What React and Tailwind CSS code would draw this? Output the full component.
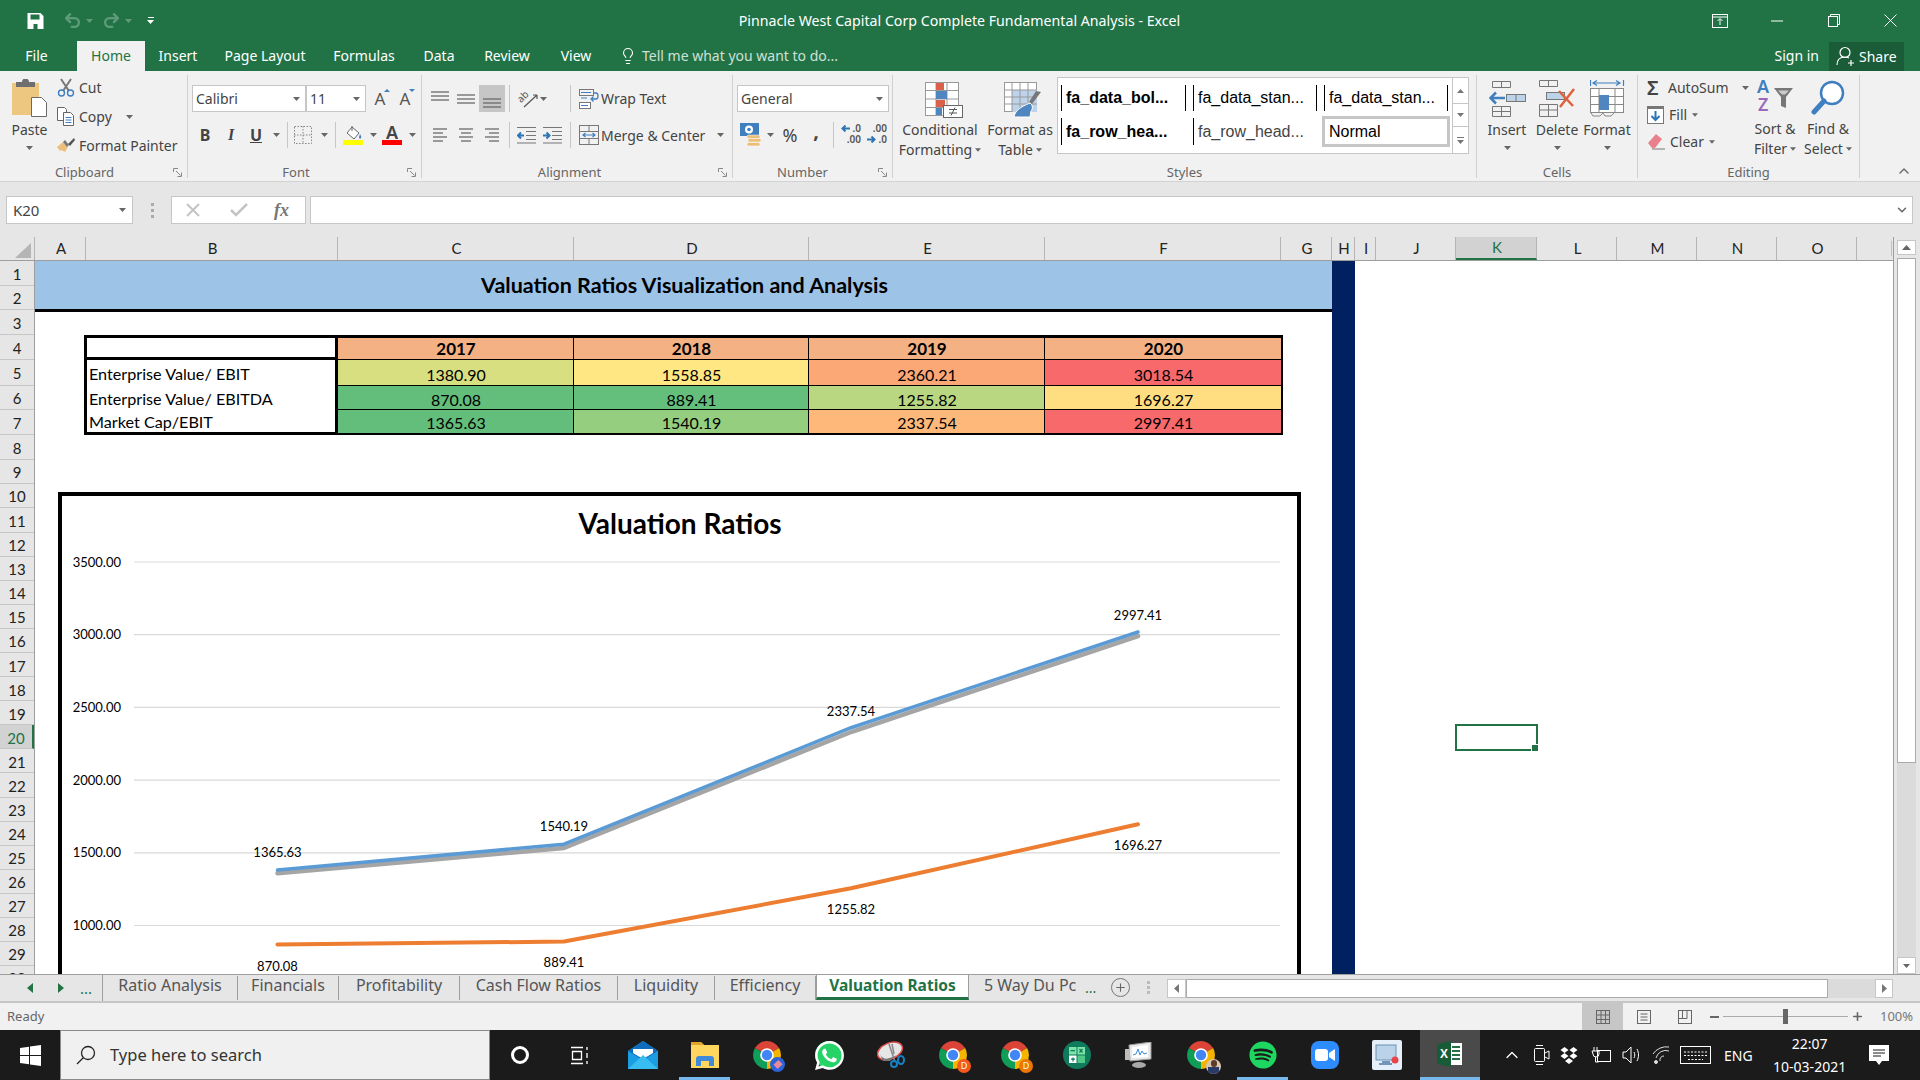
import React from "react";
import { Undo2, Redo2, Lightbulb, ChevronUp, ChevronDown, Plus } from "lucide-react";
import { FaWhatsapp, FaSpotify } from "react-icons/fa";

const Caret = ({ c = "#666", w = 7 }) => (
  <svg width={w} height="4" viewBox="0 0 7 4" className="block shrink-0"><path d="M0 0h7L3.5 4z" fill={c} /></svg>
);
const Launcher = () => (
  <svg width="9" height="9" viewBox="0 0 9 9" className="absolute right-[5px] bottom-[1px]" fill="none" stroke="#888"><path d="M.5 4V.5H5M3 3l4.5 4.500M8.500 4.500v4h-4" /></svg>
);
const Lines = ({ rows, w = 20, h = 22 }) => (
  <svg width={w} height={h} viewBox={`0 0 ${w} ${h}`} stroke="#6a6a6a" strokeWidth="1.3">
    {rows.map(([a, b, y], i) => <path key={i} d={`M${a} ${y}H${b}`} />)}
  </svg>
);

function Group({ label, className, labelClass = "", launcher = true, children }) {
  return (
    <div className={`relative h-[103px] mt-[4px] border-r border-[#D0D0D0] shrink-0 flex flex-col ${className}`}>
      <div className="h-[89px] shrink-0 flex">{children}</div>
      <div className={`h-[17px] shrink-0 leading-[17px] text-[13px] text-[#666] text-center ${labelClass}`}>{label}</div>
      {launcher && <Launcher />}
    </div>
  );
}

const Combo = ({ className, text }) => (
  <div className={`h-[27px] bg-white border border-[#C6C6C6] flex items-center justify-between px-[3px] ${className}`}>
    <span className="text-[14px] text-[#444]">{text}</span>
    <span className="pr-[2px]"><Caret /></span>
  </div>
);
const Cell = ({ className = "", children }) => (
  <div className={`h-full flex items-center justify-center shrink-0 ${className}`}>{children}</div>
);
const Sep = ({ className = "w-[6px]" }) => (
  <div className={`h-full flex justify-center shrink-0 ${className}`}><div className="w-px h-full bg-[#C6C6C6]" /></div>
);

const PasteIcon = () => (
  <svg width="37" height="38" viewBox="0 0 37 38" className="block">
    <rect x="1" y="4" width="27" height="32" fill="#EDC67F" />
    <path d="M5 3h6a3.5 3.5 0 0 1 7 0h6v5H5z" fill="#6F6F6F" />
    <path d="M20.5 18.500h10l5 5v14h-15z" fill="#fff" stroke="#6a6a6a" />
  </svg>
);
const CutIcon = () => (
  <svg width="18" height="19" viewBox="0 0 18 19" fill="none">
    <path d="M4 1l8 12M14 1L6 13" stroke="#777" strokeWidth="2" />
    <circle cx="4.500" cy="15" r="3" stroke="#3F7FBF" strokeWidth="1.400" />
    <circle cx="13.500" cy="15" r="3" stroke="#3F7FBF" strokeWidth="1.400" />
  </svg>
);
const CopyIcon = () => (
  <svg width="18" height="19" viewBox="0 0 18 19" fill="none" stroke="#666">
    <path d="M.5.500h7l2 2v11h-9z" fill="#fff" />
    <path d="M6.500 5.500h7l3 3v10h-10z" fill="#fff" />
    <path d="M8.500 10.500h6M8.500 13h6M8.500 15.500h6" stroke="#3F7FBF" />
  </svg>
);
const PainterIcon = () => (
  <svg width="18" height="15" viewBox="0 0 18 15">
    <path d="M0 9l6-5 5 5-3 5-4-2-1 1z" fill="#EDBF7F" />
    <path d="M6 4l4 5 2-2-4-5z" fill="#777" />
    <path d="M11 6l6-6 1 2-5 6z" fill="#555" />
  </svg>
);
const GrowA = ({ up }) => (
  <span className="relative inline-block text-[17px] leading-[20px] text-[#555] w-[14px] text-center">A
    <svg width="6" height="3" viewBox="0 0 6 3" className="absolute right-[-3px] top-[0px]"><path d={up ? "M0 3L3 0l3 3z" : "M0 0h6L3 3z"} fill="#3F7FBF" /></svg>
  </span>
);
const BorderIcon = () => (
  <svg width="18" height="18" viewBox="0 0 18 18" fill="none" stroke="#888" strokeDasharray="1.500 1.500"><rect x=".5" y=".5" width="17" height="17" /><path d="M9 0v18M0 9h18" /></svg>
);
const FillIcon = () => (
  <div className="flex flex-col items-center">
    <svg width="18" height="14" viewBox="0 0 18 14" fill="none">
      <path d="M8 1l7 6-5 6-7-6z" fill="#fff" stroke="#666" />
      <path d="M8 0v5" stroke="#666" />
      <path d="M16 8c1 2 1.500 3 1 4-.7 1-2 .5-2-.7z" fill="#3F7FBF" />
    </svg>
    <div className="w-[20px] h-[5px] bg-[#FFFF00]" />
  </div>
);
const ColorA = () => (
  <div className="flex flex-col items-center">
    <span className="text-[18px] leading-[15px] font-semibold text-[#444]">A</span>
    <div className="w-[20px] h-[5px] bg-[#FF0000]" />
  </div>
);
const OrientIcon = () => (
  <svg width="24" height="20" viewBox="0 0 24 20" fill="none" overflow="visible">
    <text x="8" y="11" fontSize="10" fill="#555" textAnchor="middle" transform="rotate(-45 8 8)" fontFamily="Noto Sans, sans-serif">ab</text>
    <path d="M9 18L22 6M22 6h-4M22 6v4" stroke="#555" strokeWidth="1.200" />
  </svg>
);
const IndentIcon = ({ inc }) => (
  <svg width="19" height="18" viewBox="0 0 19 18" fill="none">
    <path d="M0 1.500h19M9 5.500h10M9 9.500h10M9 13.500h10M0 17h19" stroke="#777" strokeWidth="1.200" />
    <path d={inc ? "M0 9.500h6M3.500 6.500l3 3-3 3" : "M7 9.500H1M4 6.500l-3 3 3 3"} stroke="#2F74B5" strokeWidth="2" />
  </svg>
);
const WrapIcon = () => (
  <svg width="20" height="20" viewBox="0 0 20 20" fill="none">
    <rect x=".5" y=".5" width="14" height="6" stroke="#777" /><rect x=".5" y="13.500" width="11" height="6" stroke="#777" fill="#fff" />
    <path d="M2 3.500h10M2 9h6M2 16.500h7" stroke="#3F7FBF" />
    <path d="M14 4h3q2 0 2 3t-2 3h-4M14.500 7.500L12 10l2.500 2.500" stroke="#3F7FBF" strokeWidth="1.300" />
  </svg>
);
const MergeIcon = () => (
  <svg width="20" height="20" viewBox="0 0 20 20" fill="none">
    <rect x=".5" y=".5" width="19" height="19" stroke="#777" /><path d="M0 6.500h20M0 13.500h20M10 0v6M10 14v6" stroke="#777" />
    <path d="M4 10h12M6.500 8L4 10l2.500 2M13.500 8l2.500 2-2.500 2" stroke="#3F7FBF" strokeWidth="1.200" />
  </svg>
);
const MoneyIcon = () => (
  <svg width="21" height="24" viewBox="0 0 21 24">
    <rect x="0" y="0" width="19" height="13" fill="#3F7FBF" /><circle cx="9" cy="6.500" r="4" fill="#fff" /><circle cx="9" cy="6.500" r="1.800" fill="#3F7FBF" />
    <rect x="7" y="12" width="13" height="3.500" rx="1.500" fill="#EBBE7A" stroke="#fff" strokeWidth=".5" />
    <rect x="8" y="15.500" width="13" height="3.500" rx="1.500" fill="#EBBE7A" stroke="#fff" strokeWidth=".5" />
    <rect x="7" y="19.500" width="13" height="3.500" rx="1.500" fill="#EBBE7A" stroke="#fff" strokeWidth=".5" />
  </svg>
);
const DecIcon = ({ inc }) => (
  <div className="relative w-[20px] h-[24px] text-[10px] leading-[11px] font-semibold text-[#555] text-right">
    <div>{inc ? ".0" : ".00"}</div><div>{inc ? ".00" : ".0"}</div>
    <svg width="9" height="7" viewBox="0 0 9 7" className={inc ? "absolute left-0 top-[2px]" : "absolute left-0 top-[13px]"}>
      <path d={inc ? "M9 3.500H2M4.500.5l-3 3 3 3" : "M0 3.500h7M4.500.5l3 3-3 3"} stroke="#2F74B5" strokeWidth="2" fill="none" />
    </svg>
  </div>
);
const CondIcon = () => (
  <svg width="38" height="36" viewBox="0 0 38 36" fill="none" className="ml-[7px]">
    <rect x=".5" y=".5" width="33" height="33" fill="#fff" stroke="#999" />
    <path d="M11 0v34M22 0v34M0 8.500h34M0 17h34M0 25.500h34" stroke="#999" />
    <rect x="11" y="1" width="8" height="7" fill="#D8624A" /><rect x="11" y="9" width="11" height="8" fill="#4F86BF" />
    <rect x="11" y="18" width="9" height="7" fill="#D8624A" /><rect x="11" y="26" width="6" height="7" fill="#4F86BF" />
    <rect x="18.500" y="23.500" width="19" height="12" fill="#fff" stroke="#666" />
    <path d="M24 27.500h8M24 31h8M30 25.500l-4 8" stroke="#555" />
  </svg>
);
const TableIcon = () => (
  <svg width="38" height="36" viewBox="0 0 38 36" fill="none" className="ml-[6px]">
    <rect x=".5" y=".5" width="32" height="29" fill="#fff" stroke="#999" />
    <rect x="8" y="8" width="25" height="22" fill="#BCD3EA" />
    <path d="M8 0v30M16 0v30M24 0v30M0 8h33M0 15h33M0 22h33" stroke="#999" />
    <path d="M37 10l-9 12-3-2 7-11z" fill="#777" />
    <path d="M26 21c3 2 3 6 1 8l-1 6H10c1-6 6-10 16-14z" fill="#4F86BF" stroke="#fff" />
  </svg>
);
const InsertIcon = () => (
  <svg width="37" height="36" viewBox="0 0 37 36" fill="none" stroke="#777">
    <path d="M3.500.5h18v6h-18zM12.500.5v6M3.500 25.500h18v10h-18zM3.500 30.500h18M12.500 25.500v10" />
    <rect x="17.500" y="13.500" width="19" height="7" fill="#BDD3EA" /><path d="M27 13.500v7" />
    <path d="M16 17H2M7 11.500L1.500 17 7 22.500" stroke="#3F7FBF" strokeWidth="2.500" />
  </svg>
);
const DeleteIcon = () => (
  <svg width="37" height="37" viewBox="0 0 37 37" fill="none" stroke="#777">
    <path d="M.5.500h18v6H.5zM9.500.5v6M.5 24.500h18v12H.5zM.5 30h18M9.500 24.500v12" />
    <rect x="7.500" y="12.500" width="18" height="7" fill="#BDD3EA" />
    <path d="M20 11l14 15M35 9L21 27" stroke="#E0603D" strokeWidth="2.500" />
  </svg>
);
const FormatIcon = () => (
  <svg width="35" height="37" viewBox="0 0 35 37" fill="none" stroke="#888">
    <path d="M3 3h27M7 .5L3 3l4 2.500M26 .5L30 3l-4 2.500M.5 0v6M33.500 0v6" stroke="#3F7FBF" strokeWidth="1.200" />
    <rect x=".5" y="8.500" width="33" height="24" fill="#fff" />
    <path d="M9 8v25M25 8v25M0 16.500h34M0 24.500h34" />
    <rect x="9" y="15" width="10" height="15" fill="#4F86BF" stroke="none" />
    <path d="M1 33l2 3h7l3-3M13 33l2 3h6l3-3" />
  </svg>
);
const FillDown = () => (
  <svg width="17" height="18" viewBox="0 0 17 18" fill="none">
    <rect x=".5" y=".5" width="16" height="17" fill="#fff" stroke="#777" /><rect x="0" y="0" width="17" height="3" fill="#777" />
    <path d="M8.500 5v9M4.500 10l4 4 4-4" stroke="#2F74B5" strokeWidth="2" />
  </svg>
);
const Eraser = () => (
  <svg width="18" height="17" viewBox="0 0 18 17">
    <path d="M1 10l8-9 6 5-7 9H5z" fill="#E9818C" /><path d="M5 16h13" stroke="#777" />
  </svg>
);
const SortIcon = () => (
  <div className="relative w-[36px] h-[34px]">
    <span className="absolute left-0 top-[-2px] text-[18px] leading-[17px] font-semibold text-[#3F7FBF]">A</span>
    <span className="absolute left-[1px] top-[16px] text-[18px] leading-[17px] font-semibold text-[#9A68BE]">Z</span>
    <svg width="19" height="20" viewBox="0 0 19 20" className="absolute right-0 top-[8px]"><path d="M0 0h19l-7 9v11l-5-2V9z" fill="#777" /><path d="M4 2.500h11l-4 4H8z" fill="#ccc" /></svg>
  </div>
);
const FindIcon = () => (
  <svg width="34" height="35" viewBox="0 0 34 35" fill="none">
    <circle cx="21" cy="13" r="11" stroke="#3F7FBF" strokeWidth="2.500" fill="#fff" />
    <path d="M13 21L3 32" stroke="#3F7FBF" strokeWidth="5" strokeLinecap="round" />
  </svg>
);

function Ribbon() {
  return (
    <div className="h-[111px] bg-[#F1F1F1] border-b border-[#D2D2D2] flex relative text-[#444] text-[14px]">
      <Group label="Clipboard" className="w-[188px]" labelClass="pr-[18px]">
        <div className="w-[59px] flex flex-col items-center pt-[4px]">
          <PasteIcon />
          <div className="mt-[4px] leading-[18px]">Paste</div>
          <div className="mt-[7px]"><Caret /></div>
        </div>
        <div className="flex flex-col -mt-[2px] -ml-[2px]">
          <div className="h-[29px] flex items-center gap-[4px]"><CutIcon />Cut</div>
          <div className="h-[29px] flex items-center gap-[4px]"><CopyIcon />Copy<span className="ml-[10px]"><Caret /></span></div>
          <div className="h-[28px] flex items-center gap-[4px] whitespace-nowrap"><PainterIcon />Format Painter</div>
        </div>
      </Group>
      <Group label="Font" className="w-[234px]" labelClass="pr-[17px]">
        <div className="pl-[4px] pt-[10px] flex flex-col">
          <div className="flex items-center">
            <Combo className="w-[114px]" text="Calibri" />
            <Combo className="w-[60px]" text="11" />
            <div className="w-[26px] flex justify-center ml-[1px]"><GrowA up /></div>
            <div className="w-[24px] flex justify-center"><GrowA /></div>
          </div>
          <div className="flex h-[26px] mt-[10px] text-[#444]">
            <Cell className="w-[26px] font-bold text-[16px]">B</Cell>
            <Cell className="w-[26px] italic font-bold text-[16px] font-['Liberation_Serif',serif]">I</Cell>
            <Cell className="w-[24px] underline font-bold text-[16px]">U</Cell>
            <Cell className="w-[16px]"><Caret /></Cell>
            <Sep />
            <Cell className="w-[26px]"><BorderIcon /></Cell>
            <Cell className="w-[16px]"><Caret /></Cell>
            <Sep />
            <Cell className="w-[30px]"><FillIcon /></Cell>
            <Cell className="w-[10px]"><Caret /></Cell>
            <Cell className="w-[28px]"><ColorA /></Cell>
            <Cell className="w-[12px]"><Caret /></Cell>
          </div>
        </div>
      </Group>
      <Group label="Alignment" className="w-[311px]" labelClass="pr-[15px]">
        <div className="pl-[5px] pt-[10px] flex flex-col">
          <div className="flex h-[27px]">
            <Cell className="w-[26px]"><Lines rows={[[1, 19, 4], [1, 19, 8], [1, 19, 12]]} /></Cell>
            <Cell className="w-[26px]"><Lines rows={[[1, 19, 7], [1, 19, 11], [1, 19, 15]]} /></Cell>
            <Cell className="w-[26px] bg-[#C6C6C6]"><Lines rows={[[1, 19, 11], [1, 19, 15], [1, 19, 19]]} /></Cell>
            <Sep className="w-[8px]" />
            <Cell className="w-[27px]"><OrientIcon /></Cell>
            <Cell className="w-[26px] justify-start"><Caret /></Cell>
            <Sep className="w-[8px]" />
          </div>
          <div className="flex h-[26px] mt-[10px]">
            <Cell className="w-[26px]"><Lines rows={[[3, 17, 5], [3, 13, 9], [3, 17, 13], [3, 13, 17]]} /></Cell>
            <Cell className="w-[26px]"><Lines rows={[[3, 17, 5], [5, 15, 9], [3, 17, 13], [5, 15, 17]]} /></Cell>
            <Cell className="w-[26px]"><Lines rows={[[3, 17, 5], [7, 17, 9], [3, 17, 13], [7, 17, 17]]} /></Cell>
            <Sep className="w-[8px]" />
            <Cell className="w-[26px]"><IndentIcon /></Cell>
            <Cell className="w-[27px]"><IndentIcon inc /></Cell>
            <Sep className="w-[8px]" />
          </div>
        </div>
        <div className="pl-[5px] pt-[10px] flex flex-col">
          <div className="h-[27px] flex items-center gap-[2px] whitespace-nowrap"><WrapIcon />Wrap Text</div>
          <div className="h-[26px] mt-[10px] flex items-center gap-[2px] whitespace-nowrap"><MergeIcon />Merge &amp; Center<span className="ml-[10px]"><Caret /></span></div>
        </div>
      </Group>
      <Group label="Number" className="w-[160px]" labelClass="pr-[20px]">
        <div className="pl-[4px] pt-[10px] flex flex-col">
          <Combo className="w-[152px]" text="General" />
          <div className="flex h-[26px] mt-[10px]">
            <Cell className="w-[27px]"><MoneyIcon /></Cell>
            <Cell className="w-[12px]"><Caret /></Cell>
            <Cell className="w-[28px] text-[18px]">%</Cell>
            <Cell className="w-[24px] text-[20px] font-bold pb-[8px]">,</Cell>
            <Sep className="w-[10px]" />
            <Cell className="w-[26px]"><DecIcon inc /></Cell>
            <Cell className="w-[26px]"><DecIcon /></Cell>
          </div>
        </div>
      </Group>
      <Group label="Styles" className="w-[584px]" launcher={false}>
        <div className="w-[92px] pl-[2px] pt-[7px] flex flex-col items-center">
          <CondIcon />
          <div className="mt-[2px] leading-[20px]">Conditional</div>
          <div className="leading-[20px] flex items-center gap-[3px]">Formatting<Caret w={6} /></div>
        </div>
        <div className="w-[70px] pt-[7px] flex flex-col items-center whitespace-nowrap">
          <TableIcon />
          <div className="mt-[2px] leading-[20px]">Format as</div>
          <div className="leading-[20px] flex items-center gap-[3px]">Table<Caret w={6} /></div>
        </div>
        <div className="ml-[2px] mt-[2px] w-[412px] h-[77px] bg-white border border-[#C6C6C6] flex font-['Liberation_Sans',sans-serif] text-[16px] text-black">
          <div className="flex-1 pl-[3px] pt-[7px] grid grid-cols-[125px_124px_124px] gap-x-[7px] gap-y-[7px] grid-rows-[26px_27px] whitespace-nowrap">
            <div className="border-x border-black pl-[4px] font-bold leading-[26px]">fa_data_bol...</div>
            <div className="border-x border-black pl-[4px] leading-[26px]">fa_data_stan...</div>
            <div className="border-x border-black pl-[4px] leading-[26px]">fa_data_stan...</div>
            <div className="border-l border-black pl-[4px] font-bold leading-[27px]">fa_row_hea...</div>
            <div className="border-l border-black pl-[4px] leading-[27px] text-[#444]">fa_row_head...</div>
            <div className="-mx-[2px] -my-[2px] h-[31px] border-[3px] border-[#C6C6C6] pl-[4px] leading-[25px]">Normal</div>
          </div>
          <div className="w-[16px] border-l border-[#C6C6C6] flex flex-col">
            <div className="h-[26px] border-b border-[#C6C6C6] flex items-center justify-center"><svg width="7" height="4" viewBox="0 0 7 4"><path d="M0 4h7L3.500 0z" fill="#777" /></svg></div>
            <div className="h-[23px] border-b border-[#C6C6C6] flex items-center justify-center"><Caret c="#777" /></div>
            <div className="flex-1 flex flex-col gap-[2px] items-center justify-center"><div className="w-[7px] h-px bg-[#777]" /><Caret c="#777" /></div>
          </div>
        </div>
      </Group>
      <Group label="Cells" className="w-[161px]" launcher={false}>
        <div className="flex pl-[5px] pt-[5px]">
          {[["Insert", <InsertIcon key="i" />], ["Delete", <DeleteIcon key="d" />], ["Format", <FormatIcon key="f" />]].map(([t, ic]) => (
            <div key={t} className="w-[50px] flex flex-col items-center">
              <div className="h-[37px] flex items-center">{ic}</div>
              <div className="mt-[3px] leading-[20px]">{t}</div>
              <div className="mt-[6px]"><Caret /></div>
            </div>
          ))}
        </div>
      </Group>
      <Group label="Editing" className="w-[222px]" launcher={false}>
        <div className="w-[112px] pl-[9px] flex flex-col -mt-[1px]">
          <div className="h-[27px] flex items-center gap-[5px]"><span className="text-[20px] font-semibold leading-none w-[16px] text-[#444]">Σ</span>AutoSum<span className="ml-[8px]"><Caret /></span></div>
          <div className="h-[27px] flex items-center gap-[5px]"><FillDown />Fill<Caret w={6} /></div>
          <div className="h-[27px] flex items-center gap-[5px]"><Eraser />Clear<Caret w={6} /></div>
        </div>
        <div className="w-[50px] pt-[5px] flex flex-col items-center">
          <SortIcon />
          <div className="mt-[5px] leading-[20px] whitespace-nowrap">Sort &amp;</div>
          <div className="leading-[20px] flex items-center gap-[3px]">Filter<Caret w={6} /></div>
        </div>
        <div className="w-[56px] pt-[5px] flex flex-col items-center">
          <FindIcon />
          <div className="mt-[4px] leading-[20px] whitespace-nowrap">Find &amp;</div>
          <div className="leading-[20px] flex items-center gap-[3px]">Select<Caret w={6} /></div>
        </div>
      </Group>
      <ChevronUp size={16} strokeWidth={2} className="absolute right-[8px] bottom-[2px] text-[#666]" />
    </div>
  );
}

function TitleBar() {
  return (
    <div className="h-[41px] bg-[#217346] flex items-center text-white">
      <svg width="17" height="16" viewBox="0 0 16 16" className="ml-[27px] shrink-0"><path d="M0 0h13l3 3v13H0z" fill="#fff" /><rect x="3" y="1.500" width="9" height="5" fill="#217346" /><rect x="6" y="11" width="4" height="5" fill="#217346" /></svg>
      <Undo2 size={19} strokeWidth={3} className="ml-[19px] text-[#5E9B7A] shrink-0" />
      <span className="ml-[4px]"><Caret c="#5E9B7A" /></span>
      <Redo2 size={19} strokeWidth={3} className="ml-[9px] text-[#5E9B7A] shrink-0" />
      <span className="ml-[4px]"><Caret c="#5E9B7A" /></span>
      <div className="ml-[15px] flex flex-col items-center gap-[2px]"><div className="w-[6px] h-px bg-white" /><Caret c="#fff" /></div>
      <div className="flex-1 text-center text-[14.200px] whitespace-nowrap pl-[74px]">Pinnacle West Capital Corp Complete Fundamental Analysis - Excel</div>
      <div className="grid grid-cols-[57px_57px_57px_57px] w-[229px] justify-items-center items-center shrink-0">
        <svg width="16" height="14" viewBox="0 0 16 14" fill="none" stroke="#fff"><rect x=".5" y=".5" width="15" height="13" /><path d="M0 3h16M8 11V5M5.500 7L8 4.500 10.500 7" /></svg>
        <svg width="12" height="2" viewBox="0 0 12 2"><path d="M0 1h12" stroke="#fff" /></svg>
        <svg width="12" height="13" viewBox="0 0 12 13" fill="none" stroke="#fff"><rect x=".5" y="2.500" width="9" height="10" /><path d="M2.500 2.500V.5h9v10H9.500" /></svg>
        <svg width="13" height="13" viewBox="0 0 13 13" fill="none" stroke="#fff"><path d="M.5.500l12 12M12.500.5l-12 12" /></svg>
      </div>
    </div>
  );
}

function TabRow() {
  const tabs = [["Insert", "w-[66px]"], ["Page Layout", "w-[108px]"], ["Formulas", "w-[90px]"], ["Data", "w-[60px]"], ["Review", "w-[76px]"], ["View", "w-[62px]"]];
  return (
    <div className="h-[30px] bg-[#217346] flex items-center text-white text-[14px]">
      <div className="w-[77px] text-center pr-[4px] pb-[2px]">File</div>
      <div className="w-[68px] h-[30px] bg-[#F1F1F1] text-[#217346] flex items-center justify-center pb-[2px]">Home</div>
      {tabs.map(([t, w]) => <div key={t} className={`${w} text-center pb-[2px]`}>{t}</div>)}
      <Lightbulb size={18} strokeWidth={1.5} className="ml-[12px] text-white" />
      <div className="ml-[5px] text-[#CFE0D6] pb-[2px]">Tell me what you want to do...</div>
      <div className="ml-auto mr-[10px] pb-[2px]">Sign in</div>
      <div className="w-[75px] h-[29px] bg-[#1A5C38] mr-[16px] flex items-center pl-[7px] gap-[2px]">
        <svg width="21" height="21" viewBox="0 0 21 21" fill="none" stroke="#fff" strokeWidth="1.200"><circle cx="9" cy="6.500" r="5" /><path d="M1 19c0-5 3-8 8-8 2 0 3 .5 4 1M15 14v6M12 17h6" /></svg>
        Share
      </div>
    </div>
  );
}

function FormulaStrip() {
  return (
    <div className="h-[55px] bg-[#E6E6E6] flex pt-[14px] text-[#444]">
      <div className="ml-[6px] w-[127px] h-[28px] bg-white border border-[#C6C6C6] flex items-center justify-between px-[6px] text-[15px]">K20<Caret /></div>
      <div className="w-[38px] flex flex-col items-center justify-center h-[28px] gap-[3px]"><div className="w-[3px] h-[3px] bg-[#AAA]" /><div className="w-[3px] h-[3px] bg-[#AAA]" /><div className="w-[3px] h-[3px] bg-[#AAA]" /></div>
      <div className="w-[135px] h-[28px] bg-white border border-[#C6C6C6] flex items-center text-[#BBB]">
        <svg width="16" height="16" viewBox="0 0 16 16" className="ml-[13px]" fill="none" stroke="#C4C4C4" strokeWidth="2"><path d="M2 2l12 12M14 2L2 14" /></svg>
        <svg width="18" height="14" viewBox="0 0 18 14" className="ml-[29px]" fill="none" stroke="#C4C4C4" strokeWidth="2.500"><path d="M1 7l5 5L17 1" /></svg>
        <span className="ml-[26px] italic font-bold font-['Liberation_Serif',serif] text-[18px] text-[#777]">fx</span>
      </div>
      <div className="ml-[4px] w-[1603px] h-[28px] bg-white border border-[#C6C6C6] flex items-center justify-end pr-[3px]">
        <ChevronDown size={14} strokeWidth={2.5} className="text-[#666]" />
      </div>
    </div>
  );
}

const COLS = [["A", "w-[51px]"], ["B", "w-[252px]"], ["C", "w-[236px]"], ["D", "w-[235px]"], ["E", "w-[236px]"], ["F", "w-[236px]"], ["G", "w-[51px]"], ["H", "w-[23px]"], ["I", "w-[21px]"], ["J", "w-[80px]"], ["K", "w-[81px]"], ["L", "w-[80px]"], ["M", "w-[80px]"], ["N", "w-[80px]"], ["O", "w-[80px]"]];

const DATA = [
  { name: "Enterprise Value/ EBIT", vals: [["1380.90", "bg-[#D8DF81]"], ["1558.85", "bg-[#FFE783]"], ["2360.21", "bg-[#FBA776]"], ["3018.54", "bg-[#F8696B]"]] },
  { name: "Enterprise Value/ EBITDA", vals: [["870.08", "bg-[#63BE7B]"], ["889.41", "bg-[#65BF7C]"], ["1255.82", "bg-[#B9D780]"], ["1696.27", "bg-[#FFDD81]"]] },
  { name: "Market Cap/EBIT", vals: [["1365.63", "bg-[#63BE7B]"], ["1540.19", "bg-[#95CE7F]"], ["2337.54", "bg-[#FDB87A]"], ["2997.41", "bg-[#F8696B]"]] },
];

function Chart() {
  const y = (v) => 562 + (3500 - v) * 0.1454;
  const xs = [277.5, 564, 851, 1138];
  const path = (vals) => vals.map((v, i) => `${i ? "L" : "M"}${xs[i]} ${y(v)}`).join("");
  const labels = [[277.5, 857, "1365.63"], [564, 831, "1540.19"], [851, 716, "2337.54"], [1138, 620, "2997.41"], [277.5, 971, "870.08"], [564, 967, "889.41"], [851, 914, "1255.82"], [1138, 850, "1696.27"]];
  return (
    <div className="absolute left-[23px] top-[231px] w-[1243px] h-[540px] bg-white border-4 border-black">
      <svg width="1235" height="532" viewBox="62 496 1235 532" className="block font-['Lato',sans-serif]">
        <text x="680" y="534" textAnchor="middle" fontSize="28" fontWeight="700" fill="#000">Valuation Ratios</text>
        {[3500, 3000, 2500, 2000, 1500, 1000].map((v) => (
          <g key={v}>
            <path d={`M134 ${y(v)}H1280`} stroke="#D9D9D9" strokeWidth="1.200" />
            <text x="121" y={y(v) + 4.500} textAnchor="end" fontSize="13" fill="#000">{v.toFixed(2)}</text>
          </g>
        ))}
        <path d={path([1365.63, 1540.19, 2337.54, 2997.41])} transform="translate(0 1)" fill="none" stroke="#A5A5A5" strokeWidth="4.500" strokeLinecap="round" strokeLinejoin="round" />
        <path d={path([1380.9, 1558.85, 2360.21, 3018.54])} fill="none" stroke="#5B9BD5" strokeWidth="3.500" strokeLinecap="round" strokeLinejoin="round" />
        <path d={path([870.08, 889.41, 1255.82, 1696.27])} fill="none" stroke="#ED7D31" strokeWidth="4" strokeLinecap="round" strokeLinejoin="round" />
        {labels.map(([x, yy, t]) => <text key={t} x={x} y={yy} textAnchor="middle" fontSize="13" fill="#000">{t}</text>)}
      </svg>
    </div>
  );
}

function Sheet() {
  const rows = Array.from({ length: 30 }, (_, i) => i + 1);
  return (
    <div className="h-[737px] flex bg-[#E6E6E6] font-['Lato',sans-serif]">
      <div className="w-[1894px] flex flex-col border-r border-[#9E9E9E]">
        <div className="h-[24px] flex border-b border-[#9E9E9E] text-[15px] text-[#222] shrink-0">
          <div className="w-[35px] border-r border-[#B5B5B5] relative">
            <svg width="16" height="15" viewBox="0 0 16 15" className="absolute left-[15px] top-[6px]"><path d="M16 0v15H0z" fill="#B5B5B5" /></svg>
          </div>
          {COLS.map(([c, w]) => (
            <div key={c} className={`${w} shrink-0 flex items-center justify-center pl-[2px] border-r border-[#B5B5B5] ${c === "K" ? "bg-[#D2D2D2] text-[#217346] border-b-2 border-b-[#217346]" : ""}`}>{c}</div>
          ))}
          <div className="flex-1 flex justify-end items-center pr-[1px]"><div className="w-px h-[15px] bg-[#F4B183]" /></div>
        </div>
        <div className="flex-1 flex min-h-0 overflow-hidden">
          <div className="w-[35px] grid grid-rows-[25px_24px_25px_25px_26px_24px_25px_25px_24px_24px_25px_repeat(19,24.06px)] text-[15px] text-[#222] shrink-0 border-r border-[#9E9E9E]">
            {rows.map((r) => (
              <div key={r} className={`flex items-center justify-center pt-[2px] border-b border-[#C6C6C6] ${r === 20 ? "bg-[#D2D2D2] text-[#217346] border-r-2 border-r-[#217346]" : ""}`}>{r}</div>
            ))}
          </div>
          <div className="relative flex-1 bg-white overflow-hidden grid grid-cols-[51px_252px_236px_235px_236px_236px_51px_23px_1fr] grid-rows-[25px_24px_25px_25px_26px_24px_25px_25px_24px_24px_25px_repeat(19,24.06px)] text-[16px] text-black">
            <div className="col-start-1 col-span-7 row-start-1 row-span-2 -mb-[2px] z-10 bg-[#9DC3E6] border-b-[3px] border-black flex items-center justify-center font-bold text-[21.500px] pl-[2px]">Valuation Ratios Visualization and Analysis</div>
            <div className="col-start-8 row-start-1 row-end-[31] bg-[#002060]" />
            <div className="col-start-2 row-start-4 -ml-[2px] border-[3px] border-black" />
            {["2017", "2018", "2019", "2020"].map((yr, i) => (
              <div key={yr} className={`row-start-4 bg-[#F4B183] border-t-[3px] border-b border-black flex items-center justify-center font-bold text-[17px] pl-[1px] ${i === 3 ? "border-r-2 -mr-[2px]" : "border-r"} ${["col-start-3", "col-start-4", "col-start-5", "col-start-6"][i]}`}>{yr}</div>
            ))}
            <div className="col-start-2 row-start-5 row-span-3 -ml-[2px] border-x-[3px] border-b-[3px] border-black pl-[2px] grid grid-rows-[25px_24px_23px] text-[16.200px]">
              {DATA.map((d) => <div key={d.name} className="flex items-center pt-[4px]">{d.name}</div>)}
            </div>
            {DATA.map((d, ri) => d.vals.map(([v, bg], ci) => (
              <div key={v} className={`${bg} ${["row-start-5 pt-[4px]", "row-start-6 pt-[4px]", "row-start-7 pt-[3px]"][ri]} ${["col-start-3", "col-start-4", "col-start-5", "col-start-6"][ci]} flex items-center justify-center pl-[1px] border-black ${ri === 2 ? "border-b-2" : "border-b"} ${ci === 3 ? "border-r-2 -mr-[2px]" : "border-r"}`}>{v}</div>
            )))}
            <Chart />
            <div className="absolute left-[1420px] top-[463px] w-[83px] h-[27px] border-2 border-[#217346]">
              <div className="absolute right-[-3px] bottom-[-3px] w-[6px] h-[6px] bg-[#217346] border border-white box-content" />
            </div>
          </div>
        </div>
      </div>
      <div className="flex-1 pl-[3px] pt-[3px] flex flex-col">
        <div className="w-[19px] h-[15px] bg-white border border-[#C6C6C6] flex items-center justify-center"><svg width="9" height="5" viewBox="0 0 9 5"><path d="M0 5h9L4.500 0z" fill="#666" /></svg></div>
        <div className="w-[19px] flex-1 bg-[#DBDBDB] mt-[3px] flex flex-col">
          <div className="h-[505px] bg-white border border-[#ABABAB]" />
        </div>
        <div className="w-[19px] h-[17px] bg-white border border-[#C6C6C6] flex items-center justify-center"><Caret w={9} /></div>
      </div>
    </div>
  );
}

function SheetTabs() {
  const tabs = [["Ratio Analysis", "w-[135px]"], ["Financials", "w-[101px]"], ["Profitability", "w-[121px]"], ["Cash Flow Ratios", "w-[158px]"], ["Liquidity", "w-[97px]"], ["Efficiency", "w-[101px]"]];
  return (
    <div className="h-[29px] bg-[#E6E6E6] border-t border-[#9E9E9E] border-b-2 border-b-[#C6C6C6] flex text-[16px] text-[#555]">
      <div className="w-[103px] h-[26px] flex items-center pl-[27px] text-[#217346] border-r border-[#9E9E9E]">
        <svg width="6" height="10" viewBox="0 0 6 10"><path d="M6 0v10L0 5z" fill="#217346" /></svg>
        <svg width="6" height="10" viewBox="0 0 6 10" className="ml-[25px]"><path d="M0 0v10l6-5z" fill="#217346" /></svg>
        <span className="ml-[16px] leading-none text-[15px]">...</span>
      </div>
      {tabs.map(([t, w]) => (
        <div key={t} className={`${w} h-[24px] mt-[1px] pb-[6px] border-r border-[#9E9E9E] flex items-center justify-center whitespace-nowrap`}>{t}</div>
      ))}
      <div className="w-[153px] h-[25px] bg-white border-x border-[#9E9E9E] border-b-[3px] border-b-[#217346] flex items-center justify-center font-bold text-[15.500px] text-[#217346] whitespace-nowrap">Valuation Ratios</div>
      <div className="ml-[15px] w-[96px] overflow-hidden whitespace-nowrap h-[24px] pb-[4px] flex items-center">5 Way Du Pc</div>
      <div className="ml-[5px] h-[24px] flex items-center text-[#217346] text-[14px]">...</div>
      <div className="ml-[15px] mt-[3px] w-[19px] h-[19px] rounded-full border border-[#777] flex items-center justify-center"><Plus size={13} strokeWidth={2} className="text-[#666]" /></div>
      <div className="ml-[17px] h-[25px] flex flex-col justify-center gap-[2px]"><div className="w-[3px] h-[3px] bg-[#BBB]" /><div className="w-[3px] h-[3px] bg-[#BBB]" /><div className="w-[3px] h-[3px] bg-[#BBB]" /></div>
      <div className="ml-[17px] mt-[4px] h-[19px] flex">
        <div className="w-[19px] bg-white border border-[#C6C6C6] flex items-center justify-center"><svg width="5" height="9" viewBox="0 0 5 9"><path d="M5 0v9L0 4.500z" fill="#777" /></svg></div>
        <div className="w-[642px] bg-white border border-[#ABABAB]" />
        <div className="w-[47px] bg-[#DBDBDB]" />
        <div className="w-[18px] bg-white border border-[#C6C6C6] flex items-center justify-center"><svg width="5" height="9" viewBox="0 0 5 9"><path d="M0 0v9l5-4.500z" fill="#777" /></svg></div>
      </div>
    </div>
  );
}

function StatusBar() {
  return (
    <div className="h-[27px] bg-[#F1F1F1] flex items-center text-[#666] text-[13px]">
      <div className="ml-[7px]">Ready</div>
      <div className="ml-auto flex items-center h-full">
        <div className="w-[41px] h-full bg-[#C6C6C6] flex items-center justify-center">
          <svg width="14" height="14" viewBox="0 0 14 14" fill="none" stroke="#666"><rect x=".5" y=".5" width="13" height="13" /><path d="M5 0v14M9.500 0v14M0 5h14M0 9.500h14" /></svg>
        </div>
        <div className="w-[41px] flex justify-center">
          <svg width="14" height="14" viewBox="0 0 14 14" fill="none" stroke="#666"><rect x=".5" y=".5" width="13" height="13" /><path d="M3.500 4h7M3.500 7h7M3.500 10h7" /></svg>
        </div>
        <div className="w-[41px] flex justify-center">
          <svg width="14" height="14" viewBox="0 0 14 14" fill="none" stroke="#666"><rect x=".5" y=".5" width="13" height="13" /><path d="M0 8.500h9V0M4.500 0v8" /></svg>
        </div>
        <div className="ml-[5px] w-[9px] h-[2px] bg-[#666]" />
        <div className="ml-[4px] w-[125px] h-px bg-[#AAA] relative"><div className="absolute left-[60px] top-[-7px] w-[5px] h-[15px] bg-[#666]" /></div>
        <Plus size={13} strokeWidth={3} className="ml-[3px] text-[#666]" />
        <div className="ml-[16px] w-[40px] text-[#777]">100%</div>
      </div>
    </div>
  );
}

const Chrome = ({ children }) => (
  <div className="relative w-[34px] h-[34px]">
    <svg width="34" height="34" viewBox="0 0 34 34">
      <path d="M17 17L4.900 10A14 14 0 0 1 29.100 10Z" fill="#DB4437" />
      <path d="M17 17L29.100 10A14 14 0 0 1 17 31Z" fill="#F4B400" />
      <path d="M17 17L17 31A14 14 0 0 1 4.900 10Z" fill="#0F9D58" />
      <circle cx="17" cy="17" r="6.800" fill="#fff" /><circle cx="17" cy="17" r="5.200" fill="#4285F4" />
    </svg>
    {children}
  </div>
);
const TaskIcon = ({ on, children }) => (
  <div className={`w-[62px] h-[50px] flex items-center justify-center relative shrink-0 ${on ? "after:content-[''] after:absolute after:bottom-0 after:left-[5px] after:right-[6px] after:h-[3px] after:bg-[#76B9ED]" : ""}`}>{children}</div>
);

function Taskbar() {
  return (
    <div className="h-[50px] bg-[#1B1B1B] flex items-center text-white">
      <div className="w-[60px] flex justify-center">
        <svg width="21" height="21" viewBox="0 0 21 21" fill="#fff"><path d="M0 3l9-1.300V10H0zM10 1.500L21 0v10H10zM0 11h9v8.300L0 18zM10 11h11v10l-11-1.500z" /></svg>
      </div>
      <div className="w-[430px] h-[50px] bg-[#F0F0F0] border border-[#8a8a8a] flex items-center text-[#333] font-['Noto_Sans',sans-serif]">
        <svg width="20" height="20" viewBox="0 0 20 20" fill="none" stroke="#222" strokeWidth="1.300" className="ml-[15px]"><circle cx="12" cy="8" r="6.500" /><path d="M7.500 12.500L1 19" /></svg>
        <span className="ml-[14px] text-[16.500px]">Type here to search</span>
      </div>
      <div className="w-[60px] flex justify-center"><div className="w-[18px] h-[18px] rounded-full border-[3px] border-white" /></div>
      <div className="w-[60px] flex justify-center">
        <svg width="19" height="19" viewBox="0 0 19 19" fill="none" stroke="#fff" strokeWidth="1.300"><path d="M0 1.500h12M0 17.500h12M1.500 5.500h9v8h-9zM16 1v3M16 7v5M16 15v3" /></svg>
      </div>
      <div className="w-[2px]" />
      <TaskIcon>
        <svg width="30" height="28" viewBox="0 0 30 28"><path d="M15 0L30 10v18H0V10z" fill="#1B9DE2" /><path d="M15 0L30 10 15 19 0 10z" fill="#0F6CBD" /><path d="M5 8h20v4l-10 6-10-6z" fill="#fff" /><path d="M0 28L15 14l15 14z" fill="#38BDF0" /></svg>
      </TaskIcon>
      <TaskIcon on>
        <svg width="28" height="26" viewBox="0 0 28 26"><path d="M0 0h10l3 3h15v23H0z" fill="#FFD75E" /><path d="M0 0h10l3 3H0z" fill="#E2A52B" /><path d="M5 24v-7a3 3 0 0 1 3-3h12a3 3 0 0 1 3 3v7h-5v-5h-8v5z" fill="#3F8BDA" /></svg>
      </TaskIcon>
      <TaskIcon>
        <Chrome><div className="absolute right-[-1px] bottom-[0px] w-[15px] h-[15px] rounded-full bg-[#2B63D9] flex items-center justify-center"><div className="w-[6px] h-[7px] bg-[#E88A9A] rotate-45" /></div></Chrome>
      </TaskIcon>
      <TaskIcon>
        <div className="relative w-[28px] h-[28px] rounded-full bg-[#25D366] flex items-center justify-center"><FaWhatsapp size={33} className="text-white absolute" /></div>
      </TaskIcon>
      <TaskIcon>
        <svg width="28" height="28" viewBox="0 0 28 28" fill="none"><ellipse cx="13" cy="10" rx="13" ry="8" fill="#E6E6E6" stroke="#D94A4A" strokeWidth="1.500" transform="rotate(-22 13 10)" /><path d="M3 13c3 7 10 5 16 1l-6 6H6z" fill="#777" /><path d="M12 3l6 18M15 3l2 10" stroke="#888" strokeWidth="1.500" /><circle cx="17" cy="23" r="3" stroke="#1583C9" strokeWidth="2" /><ellipse cx="24" cy="19" rx="3" ry="4" stroke="#1583C9" strokeWidth="2" /></svg>
      </TaskIcon>
      <TaskIcon>
        <Chrome><div className="absolute right-[-1px] bottom-[-1px] w-[14px] h-[14px] rounded-full bg-[#F4581C] text-[9px] leading-[14px] text-center">D</div></Chrome>
      </TaskIcon>
      <TaskIcon>
        <Chrome><div className="absolute right-[-1px] bottom-[-1px] w-[14px] h-[14px] rounded-full bg-[#EE7600] text-[9px] leading-[14px] text-center">D</div></Chrome>
      </TaskIcon>
      <TaskIcon>
        <svg width="28" height="28" viewBox="0 0 28 28"><circle cx="14" cy="14" r="14" fill="#0F7B5C" /><rect x="6" y="6" width="7.500" height="7.500" fill="#7DE3A6" /><rect x="14.500" y="6" width="7.500" height="7.500" fill="#7DE3A6" /><rect x="6" y="14.500" width="7.500" height="7.500" fill="#fff" /><rect x="14.500" y="14.500" width="7.500" height="7.500" fill="#4FC786" /><path d="M7.500 9.700h4.500M16.500 8l3 3.500M19.500 8l-3 3.500M8 18.200h4M10 16.500v4" stroke="#0F7B5C" strokeWidth="1.200" /></svg>
      </TaskIcon>
      <TaskIcon>
        <svg width="28" height="26" viewBox="0 0 28 26"><path d="M4 3l22-3v17L5 19z" fill="#E8E8E8" stroke="#999" /><path d="M7 5l16-2v12L7 16z" fill="#fff" /><path d="M8 13l3-1 2-5 2 6 2-4 2 3 3-1" stroke="#3F8BDA" fill="none" /><ellipse cx="14" cy="23" rx="7" ry="3" fill="#A8A8A8" /><rect x="0" y="7" width="5" height="11" fill="#BDBDBD" /></svg>
      </TaskIcon>
      <TaskIcon>
        <Chrome><div className="absolute right-[-3px] bottom-[-2px] w-[15px] h-[15px] rounded-full bg-[#D9C6B2] flex flex-col items-center overflow-hidden"><div className="w-[6px] h-[7px] rounded-full bg-[#5E3C26] mt-[1px]" /><div className="w-[11px] h-[7px] bg-[#2A3A66]" /></div></Chrome>
      </TaskIcon>
      <TaskIcon on><FaSpotify size={28} className="text-[#1ED760]" /></TaskIcon>
      <TaskIcon>
        <div className="w-[28px] h-[28px] rounded-[8px] bg-[#2D8CFF] flex items-center justify-center">
          <svg width="20" height="14" viewBox="0 0 20 14" fill="#fff"><rect x="0" y="1" width="13" height="12" rx="3" /><path d="M14 5l6-4v12l-6-4z" /></svg>
        </div>
      </TaskIcon>
      <TaskIcon>
        <div className="w-[30px] h-[30px] rounded-[2px] bg-[#E4EFF9] flex items-center justify-center relative">
          <svg width="24" height="24" viewBox="0 0 24 24" fill="none"><rect x="1" y="2" width="20" height="15" fill="#BBD3E8" stroke="#6E8FB0" /><path d="M7 19h8M4 21h13" stroke="#4C78A8" strokeWidth="1.500" /><circle cx="20" cy="17" r="3.500" fill="#E7464B" /></svg>
        </div>
      </TaskIcon>
      <div className="w-[2px]" />
      <div className="w-[60px] h-[50px] bg-[#4A4A4A] border-b-[3px] border-[#76B9ED] flex items-center justify-center">
        <svg width="26" height="26" viewBox="0 0 26 26"><rect x="8" y="2" width="17" height="22" fill="#fff" /><path d="M15 6h8M15 10h8M15 14h8M15 18h8" stroke="#217346" strokeWidth="2" /><path d="M0 3l14-3v26L0 23z" fill="#185C37" /><text x="7" y="17" textAnchor="middle" fontSize="12" fontWeight="700" fill="#fff" fontFamily="Liberation Sans, sans-serif">X</text></svg>
      </div>
      <div className="flex items-center flex-1 h-full">
        <ChevronUp size={20} strokeWidth={1.500} className="ml-[22px] text-white" />
        <svg width="16" height="22" viewBox="0 0 16 22" fill="none" stroke="#fff" className="ml-[12px]"><rect x=".5" y="4.500" width="10" height="13" rx="1" /><path d="M11 9l4-2v8l-4-2M2 1.500h7M2 20.500h7" /></svg>
        <svg width="18" height="18" viewBox="0 0 18 18" fill="#fff" className="ml-[10px]"><path d="M4.500 1l4 3-4 3-4-3zM13.500 1l4 3-4 3-4-3zM4.500 7l4 3-4 3-4-3zM13.500 7l4 3-4 3-4-3zM9 12l4 3-4 3-4-3z" /></svg>
        <svg width="20" height="18" viewBox="0 0 20 18" fill="none" stroke="#fff" className="ml-[13px]"><rect x="6.500" y="4.500" width="13" height="11" /><path d="M3 1v4M6 1v4M1 5h7v3a3 3 0 0 1-6 0zM4.500 11v5h3" /></svg>
        <svg width="18" height="20" viewBox="0 0 18 20" fill="none" stroke="#fff" className="ml-[11px]"><path d="M1 7h3l5-5v16l-5-5H1z" /><path d="M12 7c1 2 1 4 0 6M15 4c2 4 2 8 0 12" /></svg>
        <svg width="18" height="18" viewBox="0 0 18 18" fill="none" stroke="#ddd" className="ml-[12px]"><path d="M1 8a16 16 0 0 1 16-7M4 12a10 10 0 0 1 13-7M8 15a4 4 0 0 1 4-5" /><circle cx="4" cy="16" r="1.500" fill="#ddd" /></svg>
        <svg width="31" height="18" viewBox="0 0 31 18" fill="none" stroke="#fff" className="ml-[10px]"><rect x=".5" y=".5" width="30" height="17" /><path d="M4 6h23M4 9.500h23M8 13.500h15" strokeDasharray="2 1.500" /></svg>
        <span className="ml-[13px] text-[14px] font-['Noto_Sans',sans-serif]">ENG</span>
        <div className="ml-[17px] w-[80px] flex flex-col items-center gap-[6px] text-[14px] leading-[17px] font-['Noto_Sans',sans-serif]"><span>22:07</span><span className="whitespace-nowrap">10-03-2021</span></div>
        <svg width="20" height="21" viewBox="0 0 20 21" fill="#fff" className="ml-[19px]"><path d="M0 0h20v16h-7l-3 4-3-4H0z" /><path d="M4 5h12M4 8h12M4 11h8" stroke="#1B1B1B" /></svg>
      </div>
    </div>
  );
}

export default function App() {
  return (
    <div className="w-[1920px] h-[1080px] overflow-hidden flex flex-col font-['Noto_Sans',sans-serif]">
      <TitleBar />
      <TabRow />
      <Ribbon />
      <FormulaStrip />
      <Sheet />
      <SheetTabs />
      <StatusBar />
      <Taskbar />
    </div>
  );
}
